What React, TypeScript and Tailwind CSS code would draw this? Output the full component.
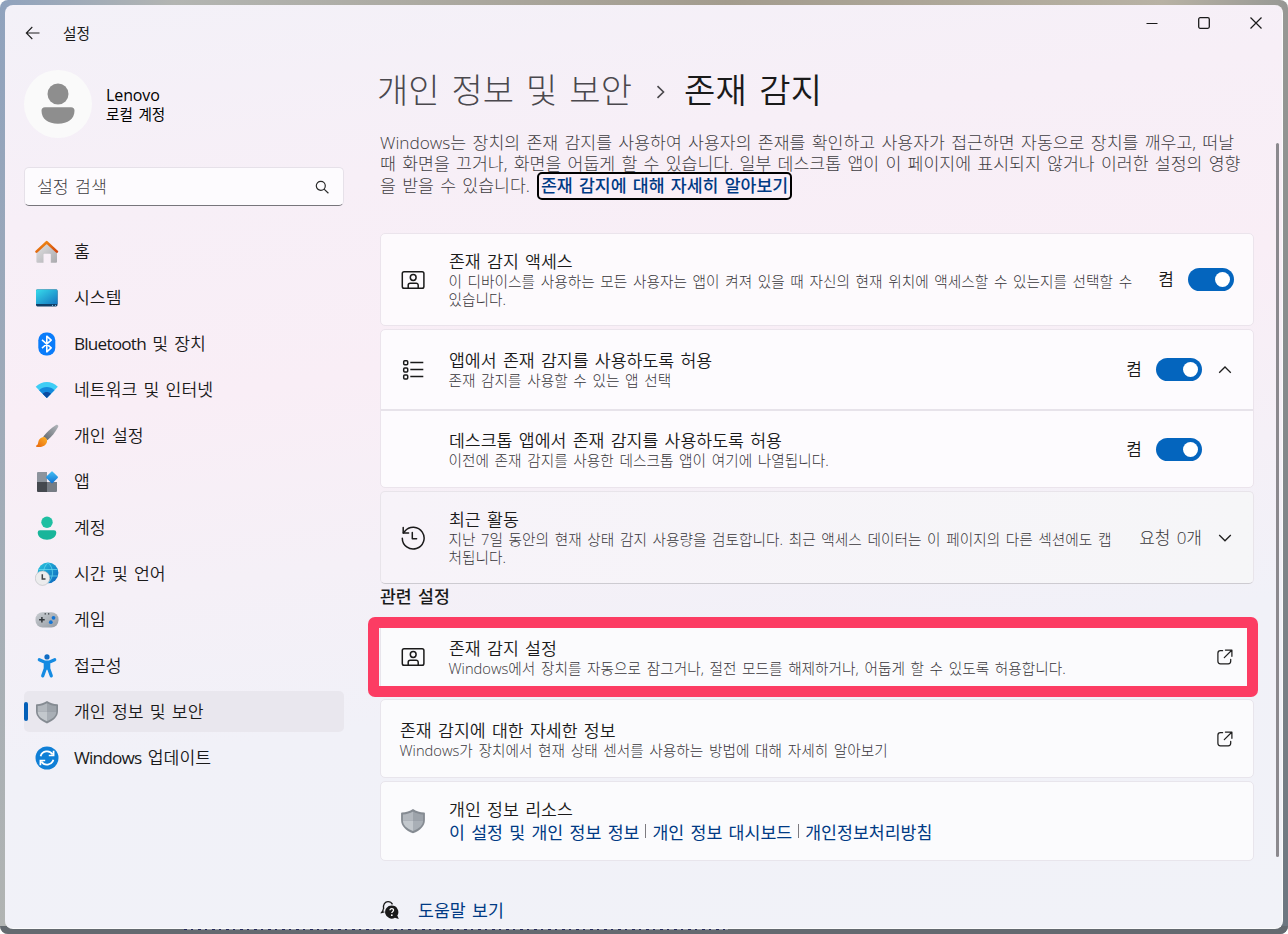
import type { ReactNode } from 'react';

type IconProps = { className?: string };

function HomeIcon() {
  return (
    <svg viewBox="0 0 24 24" className="size-6">
      <defs>
        <linearGradient id="homeBody" x1="0" y1="0" x2="1" y2="1">
          <stop offset="0" stopColor="#e4e4e6" />
          <stop offset="1" stopColor="#a9a9ad" />
        </linearGradient>
        <linearGradient id="homeRoof" x1="0" y1="0" x2="1" y2="1">
          <stop offset="0" stopColor="#f59313" />
          <stop offset="1" stopColor="#d2460f" />
        </linearGradient>
      </defs>
      <path d="M1.400 11.500 11.700 2.600 22 11.500v10.300a1 1 0 0 1-1 1h-5.200V14.500a.8.8 0 0 0-.8-.8H9.300a.8.8 0 0 0-.8.8v8.300H2.400a1 1 0 0 1-1-1Z" fill="url(#homeBody)" />
      <path d="M1.500 11.600 11.700 2.200l10.200 9.400" fill="none" stroke="url(#homeRoof)" strokeWidth="2.600" strokeLinecap="round" strokeLinejoin="round" />
    </svg>
  );
}

function SystemIcon() {
  return (
    <svg viewBox="0 0 24 24" className="size-6">
      <defs>
        <linearGradient id="sysScreen" x1="0" y1="0" x2="1" y2="1">
          <stop offset="0" stopColor="#37dcec" />
          <stop offset="1" stopColor="#1474bf" />
        </linearGradient>
      </defs>
      <rect x="1" y="3.500" width="21.500" height="17" rx="1.400" fill="#103e66" />
      <path d="M2.400 3.500h18.700a1.400 1.400 0 0 1 1.400 1.400v13H1v-13a1.400 1.400 0 0 1 1.400-1.400Z" fill="url(#sysScreen)" />
      <path d="M17 19.400h1M20 19.400h1" stroke="#7fc9ee" strokeWidth="1" />
    </svg>
  );
}

function BluetoothIcon() {
  return (
    <svg viewBox="0 0 24 24" className="size-6">
      <rect x="3.300" y="0.500" width="17" height="23" rx="7.800" fill="#0a7cfa" />
      <path d="m7 7.800 9.200 8-4.400 4V4.200l4.400 4L7 16.200" fill="none" stroke="#fff" strokeWidth="1.600" strokeLinejoin="round" />
    </svg>
  );
}

function NetworkIcon() {
  return (
    <svg viewBox="0 0 24 24" className="size-6">
      <path d="M.7 8.700C6.700 2.400 17 2.400 22.800 8.700L11.800 20Z" fill="#3fcdf5" />
      <path d="M4.100 12.200c4.300-4.400 11.100-4.400 15.400 0L11.800 20Z" fill="#1489dc" />
      <path d="M7.600 15.700c2.400-2.300 6-2.300 8.400 0L11.800 20Z" fill="#0a4aa0" />
    </svg>
  );
}

function BrushIcon() {
  return (
    <svg viewBox="0 0 24 24" className="size-6">
      <defs>
        <linearGradient id="brushHandle" x1="1" y1="0" x2="0" y2="1">
          <stop offset="0" stopColor="#b4b8bd" />
          <stop offset="1" stopColor="#5f666d" />
        </linearGradient>
        <linearGradient id="brushTip" x1="1" y1="0" x2="0" y2="1">
          <stop offset="0" stopColor="#fcb32a" />
          <stop offset="1" stopColor="#e8650b" />
        </linearGradient>
      </defs>
      <path d="M21 .9c1.500-.8 2.900.5 2.100 2.100-2.900 5.200-6.100 9.500-10.700 13.300L8.300 12.500C12 7.900 16 4 21 .9Z" fill="url(#brushHandle)" />
      <path d="M7.600 13.200c2.500-.6 5 1.700 4.400 4.500-.9 4.400-5.900 5.900-10.600 5-.6-.1-.6-.8 0-1.100 2-.9 1.500-2.800 2.300-5 .6-1.800 2.100-3 3.900-3.400Z" fill="url(#brushTip)" />
    </svg>
  );
}

function AppsIcon() {
  return (
    <svg viewBox="0 0 24 24" className="size-6">
      <defs>
        <linearGradient id="appTile" x1="0" y1="0" x2="1" y2="1">
          <stop offset="0" stopColor="#45c1f5" />
          <stop offset="1" stopColor="#0f6fd0" />
        </linearGradient>
      </defs>
      <path d="M3 2h9v10H2V3a1 1 0 0 1 1-1Z" fill="#8d949d" />
      <path d="M2 12h10v10H3a1 1 0 0 1-1-1Z" fill="#45494f" />
      <path d="M12 12h10v9a1 1 0 0 1-1 1h-9Z" fill="#767c84" />
      <rect x="12.500" y="2.800" width="9" height="9" rx="1" fill="url(#appTile)" transform="rotate(45 17 7.300)" />
    </svg>
  );
}

function AccountIcon() {
  return (
    <svg viewBox="0 0 24 24" className="size-6">
      <circle cx="12" cy="6.200" r="5.700" fill="#1fbfa2" />
      <path d="M5 14.200h14a2.300 2.300 0 0 1 2.300 2.300c0 4.400-4.200 7.200-9.300 7.200s-9.300-2.800-9.300-7.200A2.300 2.300 0 0 1 5 14.200Z" fill="#18b59a" />
    </svg>
  );
}

function TimeIcon() {
  return (
    <svg viewBox="0 0 24 24" className="size-6">
      <defs>
        <linearGradient id="globe" x1="0" y1="0" x2="1" y2="1">
          <stop offset="0" stopColor="#2bc8de" />
          <stop offset="1" stopColor="#0b62bd" />
        </linearGradient>
      </defs>
      <circle cx="13" cy="10.800" r="10.400" fill="url(#globe)" />
      <path d="M3.500 7.500h19M3.500 14h19M13 .6c-6 5.500-6 15 0 20.400M13 .6c6 5.500 6 15 0 20.400" fill="none" stroke="#6fe0f2" strokeWidth=".9" opacity=".75" />
      <circle cx="7.500" cy="16.200" r="7.200" fill="#ececed" stroke="#b9bcc0" strokeWidth=".6" />
      <path d="M7.300 12.200v4.900h3.200" fill="none" stroke="#3f4246" strokeWidth="1.500" />
    </svg>
  );
}

function GamingIcon() {
  return (
    <svg viewBox="0 0 24 24" className="size-6">
      <defs>
        <linearGradient id="pad" x1="0" y1="0" x2="1" y2="1">
          <stop offset="0" stopColor="#c9cdd2" />
          <stop offset="1" stopColor="#949aa2" />
        </linearGradient>
      </defs>
      <rect x=".5" y="4.300" width="23" height="15.300" rx="7" fill="url(#pad)" />
      <path d="M6.900 9v5.600M4.100 11.800h5.600" stroke="#33373c" strokeWidth="1.500" />
      <circle cx="18.500" cy="9.800" r="1.900" fill="#1474d4" />
      <circle cx="15.800" cy="14.200" r="1.900" fill="#1474d4" />
      <path d="M9.600 5.900h1.300M13 5.900h1.300" stroke="#33373c" strokeWidth="1.100" />
    </svg>
  );
}

function AccessibilityIcon() {
  return (
    <svg viewBox="0 0 24 24" className="size-6">
      <circle cx="12" cy="2.900" r="2.600" fill="#0f6cc4" />
      <path d="M4.300 5.700 10 8.200h4l5.700-2.500M10.300 8.600v6l-2.600 7.300M13.700 8.600v6l2.600 7.300" fill="none" stroke="#158be2" strokeWidth="3.200" strokeLinecap="round" strokeLinejoin="round" />
      <path d="M9.500 8.400h5v7.200h-5z" fill="#158be2" />
    </svg>
  );
}

function ShieldIcon({ className = 'size-6' }: IconProps) {
  return (
    <svg viewBox="0 0 24 24" className={className}>
      <path d="M12 1c3 2.100 6.300 3 10.300 3.200.4 0 .7.300.7.700v6.200c0 5.500-4.200 9.700-11 12.300C5.200 20.800 1 16.600 1 11.100V4.900c0-.4.3-.7.7-.7C5.700 4 9 3.100 12 1Z" fill="#858b92" />
      <path d="M12 3.300v8.500H2.700V6.100C6.200 5.800 9.200 5 12 3.300Z" fill="#b3b8be" />
      <path d="M12 3.300v8.500h9.300V6.100C17.800 5.800 14.800 5 12 3.300Z" fill="#9da3aa" />
      <path d="M2.700 11.800H12v9.500c-5.800-2.300-9.200-5.400-9.300-9.500Z" fill="#c3c8cd" />
      <path d="M21.300 11.800H12v9.500c5.800-2.300 9.200-5.400 9.300-9.500Z" fill="#a9afb6" />
    </svg>
  );
}

function UpdateIcon() {
  return (
    <svg viewBox="0 0 24 24" className="size-6">
      <circle cx="12" cy="12" r="11.500" fill="#0f7fd6" />
      <path d="M5.600 10.300A6.700 6.700 0 0 1 17.700 8.500M18.400 13.700A6.700 6.700 0 0 1 6.300 15.500" fill="none" stroke="#fff" strokeWidth="1.800" />
      <path d="M18.600 4.800v4.700h-4.800M5.400 19.200v-4.700h4.800" fill="none" stroke="#fff" strokeWidth="1.700" />
    </svg>
  );
}

function PresenceIcon() {
  return (
    <svg viewBox="0 0 24 24" className="size-6" fill="none" stroke="#1a1a1a" strokeWidth="1.500">
      <rect x="1.300" y="3.700" width="21.600" height="16.600" rx="1.800" />
      <circle cx="12.200" cy="9.500" r="2.900" />
      <path d="M7.200 20v-2.700a2 2 0 0 1 2-2h6a2 2 0 0 1 2 2V20" />
    </svg>
  );
}

function ListIcon() {
  return (
    <svg viewBox="0 0 24 24" className="size-6" fill="none" stroke="#1a1a1a" strokeWidth="1.500">
      <rect x="2.700" y="2.700" width="4" height="4" rx="1" />
      <rect x="2.700" y="9.900" width="4" height="4" rx="1" />
      <rect x="2.700" y="17.100" width="4" height="4" rx="1" />
      <path d="M9.300 4.500h13M9.300 11.500h13M9.300 18.500h13" />
    </svg>
  );
}

function HistoryIcon() {
  return (
    <svg viewBox="0 0 24 24" className="size-6" fill="none" stroke="#1a1a1a" strokeWidth="1.500" strokeLinecap="round" strokeLinejoin="round">
      <path d="M1.300 12.200a10.900 10.900 0 1 0 2.500-7L2.300 7" />
      <path d="M2.200 1.500v5.500h5.400M11.300 6.600v6.200h4.300" />
    </svg>
  );
}

function OpenIcon() {
  return (
    <svg viewBox="0 0 16 16" className="size-4 shrink-0" fill="none" stroke="#1f1f1f" strokeWidth="1.250" strokeLinecap="round" strokeLinejoin="round">
      <path d="M5.600 1.700H3.400A2.500 2.500 0 0 0 .9 4.200v8.100a2.500 2.500 0 0 0 2.500 2.500h7.800a2.500 2.500 0 0 0 2.500-2.500v-2" />
      <path d="M8.400 1h6.500v6.300M14.700 1.200 7.300 8.600" />
    </svg>
  );
}

function Chevron({ up }: { up?: boolean }) {
  return (
    <svg viewBox="0 0 14 14" className="size-3.5 shrink-0" fill="none" stroke="#1f1f1f" strokeWidth="1.300">
      <path d={up ? 'M1.200 9.800 7 4l5.800 5.800' : 'M1.200 4 7 9.800 12.800 4'} />
    </svg>
  );
}

function HelpIcon() {
  return (
    <svg viewBox="0 0 20 20" className="size-5">
      <path d="M3.600 9.200C2.600 4.500 5.200 1.700 8 1.700c2.100 0 3.600 1 4.500 2.700M3.400 8.800c-.2 1.500-.8 2.700-1.700 3.700 1 0 1.900-.2 2.700-.7" fill="none" stroke="#1a1a1a" strokeWidth="1.300" />
      <path d="M11.700 5.600a6.500 6.500 0 1 0 3.200 12.100l3.900 1.200-1.500-3.300a6.500 6.500 0 0 0-5.600-10Z" fill="#1a1a1a" />
      <path d="M10 10.300c0-2.400 3.700-2.200 3.500 0-.1 1.300-1.700 1.400-1.700 2.800" fill="none" stroke="#fff" strokeWidth="1.300" />
      <circle cx="11.800" cy="15.200" r=".9" fill="#fff" />
    </svg>
  );
}

const navItems: { latin?: string; label: string; icon: ReactNode; active?: boolean }[] = [
  { label: '홈', icon: <HomeIcon /> },
  { label: '시스템', icon: <SystemIcon /> },
  { latin: 'Bluetooth', label: ' 및 장치', icon: <BluetoothIcon /> },
  { label: '네트워크 및 인터넷', icon: <NetworkIcon /> },
  { label: '개인 설정', icon: <BrushIcon /> },
  { label: '앱', icon: <AppsIcon /> },
  { label: '계정', icon: <AccountIcon /> },
  { label: '시간 및 언어', icon: <TimeIcon /> },
  { label: '게임', icon: <GamingIcon /> },
  { label: '접근성', icon: <AccessibilityIcon /> },
  { label: '개인 정보 및 보안', icon: <ShieldIcon />, active: true },
  { latin: 'Windows', label: ' 업데이트', icon: <UpdateIcon /> },
];

function TitleBar() {
  return (
    <header className="flex h-14 shrink-0 justify-between">
      <div className="flex items-center pl-5">
        <svg viewBox="0 0 16 16" className="size-4" fill="none" stroke="#1f1f1f" strokeWidth="1.100">
          <path d="M14.500 8H1.300M7.300 2 1.300 8l6 6" />
        </svg>
        <span className="ml-[22px] text-[14.700px]">설정</span>
      </div>
      <div className="flex h-[35px] items-center gap-10 pr-5">
        <svg viewBox="0 0 12 12" className="size-3" stroke="#1a1a1a" strokeWidth="1.200">
          <path d="M.5 6.500h11" />
        </svg>
        <svg viewBox="0 0 12 12" className="size-3" fill="none" stroke="#1a1a1a" strokeWidth="1.300">
          <rect x=".7" y=".7" width="10.600" height="10.600" rx="1.500" />
        </svg>
        <svg viewBox="0 0 12 12" className="size-3" stroke="#1a1a1a" strokeWidth="1.200">
          <path d="m.5.5 11 11M11.500.5l-11 11" />
        </svg>
      </div>
    </header>
  );
}

function Sidebar() {
  return (
    <aside className="w-[339px] shrink-0 pt-[9px] pl-[19px]">
      <div className="flex items-center">
        <div className="flex size-[68px] items-center justify-center rounded-full bg-[#fafafa]">
          <svg viewBox="0 0 34 42" className="h-[42px] w-[34px]" fill="#8e8e8e">
            <circle cx="17" cy="11" r="10.500" />
            <path d="M4 24.300h26a3.500 3.500 0 0 1 3.500 3.500c0 8-6.500 13-16.500 13s-16.500-5-16.500-13A3.500 3.500 0 0 1 4 24.300Z" />
          </svg>
        </div>
        <div className="ml-[14px] flex flex-col text-black">
          <span className="text-base leading-5 font-medium tracking-[-0.1px]">Lenovo</span>
          <span className="text-[14.600px] leading-[18px] [word-spacing:1.800px]">로컬 계정</span>
        </div>
      </div>

      <div className="mt-[29px] flex h-[39px] items-center justify-between rounded-[5px] border border-[#e6e1e9] border-b-[#77757b] bg-[#fdfbfe] pr-3.5 pl-3">
        <span className="text-[17.250px] font-light text-[#3f3d42] [word-spacing:1.800px]">설정 검색</span>
        <svg viewBox="0 0 14 14" className="size-3.5" fill="none" stroke="#2a2a2a" strokeWidth="1.200">
          <circle cx="5.800" cy="5.800" r="4.500" />
          <path d="m9.100 9.100 4.300 4.100" />
        </svg>
      </div>

      <nav className="mt-[25px] flex flex-col gap-[5px]">
        {navItems.map((item) => (
          <a
            key={item.label}
            href="#"
            className={`relative flex h-[41px] items-center rounded-[5px] pl-[11px] ${item.active ? 'bg-[#e9e7ee]' : ''}`}
          >
            {item.active && <span className="absolute top-[11px] left-0 h-[19px] w-1 rounded-full bg-[#0460b8]" />}
            {item.icon}
            <span className="ml-[15px] text-[17.200px] font-[350] whitespace-pre [word-spacing:1.800px]">
              {item.latin && <span className="font-normal tracking-[-0.800px]">{item.latin}</span>}
              {item.label}
            </span>
          </a>
        ))}
      </nav>
    </aside>
  );
}

function Toggle() {
  return (
    <div className="flex shrink-0 items-center gap-[13px]">
      <span className="pt-px pr-px text-[17px] font-[350]">켬</span>
      <button type="button" className="flex h-[23px] w-[46px] items-center justify-end rounded-full bg-[#0465be] pr-1">
        <span className="size-[15px] rounded-full bg-white" />
      </button>
    </div>
  );
}

function RowText({ title, lines }: { title: string; lines: string[] }) {
  return (
    <div className="flex flex-col whitespace-nowrap">
      <span className="pl-px text-[17.250px] leading-[21px] font-[350] [word-spacing:1.800px]">{title}</span>
      {lines.map((line) => (
        <span key={line} className="pl-[0.500px] text-[14.680px] leading-[18px] font-light text-[#38363a] [word-spacing:1.800px]">
          {line}
        </span>
      ))}
    </div>
  );
}

function Row({
  icon,
  title,
  lines,
  children,
  className = '',
}: {
  icon?: ReactNode;
  title: string;
  lines: string[];
  children?: ReactNode;
  className?: string;
}) {
  return (
    <div className={`flex items-center ${className}`}>
      <div className="flex w-[67px] shrink-0 pl-5">{icon}</div>
      <RowText title={title} lines={lines} />
      <div className="ml-auto flex items-center">{children}</div>
    </div>
  );
}

function Main() {
  return (
    <main className="min-w-0 flex-1 pl-9">
      <h1 className="flex h-[58px] items-center text-[34px] whitespace-nowrap [word-spacing:3px]">
        <span className="-ml-[3px] font-light tracking-[0.050px] text-[#4a484d]">개인 정보 및 보안</span>
        <svg viewBox="0 0 10 14" className="mt-1 mr-[18px] ml-6 h-3.5 w-2.5" fill="none" stroke="#4a484c" strokeWidth="1.600">
          <path d="m1.500 1.200 6 5.800-6 5.800" />
        </svg>
        <span className="font-[350] tracking-[0.3px]">존재 감지</span>
      </h1>

      <div className="mt-[13px] flex flex-col text-[17.250px] font-light whitespace-nowrap text-[#3f3d42] [word-spacing:1.800px]">
        <p className="h-[21px] leading-[21px]">
          Windows는 장치의 존재 감지를 사용하여 사용자의 존재를 확인하고 사용자가 접근하면 자동으로 장치를 깨우고, 떠날
        </p>
        <p className="h-[21px] leading-[21px]">
          때 화면을 끄거나, 화면을 어둡게 할 수 있습니다. 일부 데스크톱 앱이 이 페이지에 표시되지 않거나 이러한 설정의 영향
        </p>
        <p className="flex h-[23px] items-center">
          <span>을 받을 수 있습니다.</span>
          <a
            href="#"
            className="ml-[7px] flex h-7 w-[255px] shrink-0 items-center rounded-[5px] border-2 border-black bg-[#faeff7] pl-0.5 font-medium text-[#003a84]"
          >
            존재 감지에 대해 자세히 알아보기
          </a>
        </p>
      </div>

      <div className="mt-9 flex w-[874px] flex-col">
        <section className="h-[93px] rounded-[5px] border border-[#ebe4ec] bg-[#fdfafd]">
          <Row
            className="h-full pr-[19px]"
            icon={<PresenceIcon />}
            title="존재 감지 액세스"
            lines={['이 디바이스를 사용하는 모든 사용자는 앱이 켜져 있을 때 자신의 현재 위치에 액세스할 수 있는지를 선택할 수', '있습니다.']}
          >
            <Toggle />
          </Row>
        </section>

        <section className="mt-[3px] h-[159px] rounded-[5px] border border-[#ebe4ec] bg-[#fdfbfe]">
          <Row
            className="h-[79px] pr-[21px]"
            icon={<ListIcon />}
            title="앱에서 존재 감지를 사용하도록 허용"
            lines={['존재 감지를 사용할 수 있는 앱 선택']}
          >
            <Toggle />
            <span className="ml-4">
              <Chevron up />
            </span>
          </Row>
          <Row
            className="h-[78px] border-t-2 border-[#e7e3ea] pr-[51px]"
            title="데스크톱 앱에서 존재 감지를 사용하도록 허용"
            lines={['이전에 존재 감지를 사용한 데스크톱 앱이 여기에 나열됩니다.']}
          >
            <Toggle />
          </Row>
        </section>

        <section className="mt-[3px] h-[93px] rounded-[5px] border border-[#e8e4ea] border-b-[#cdcbd1] bg-linear-to-r from-[#f7f3f9] to-[#f6f6f8]">
          <Row
            className="h-full pr-[21px]"
            icon={<HistoryIcon />}
            title="최근 활동"
            lines={['지난 7일 동안의 현재 상태 감지 사용량을 검토합니다. 최근 액세스 데이터는 이 페이지의 다른 섹션에도 캡', '처됩니다.']}
          >
            <span className="mr-4 text-[17px] font-light whitespace-nowrap text-[#38363a] [word-spacing:1.800px]">요청 0개</span>
            <Chevron />
          </Row>
        </section>

        <h2 className="h-[34px] text-[17.250px] leading-[25px] font-medium [word-spacing:1.800px]">관련 설정</h2>

        <section className="relative h-[78px] rounded-[5px] border border-[#e8e5ec] bg-[#fbfbfd]">
          <Row
            className="h-full pr-5"
            icon={<PresenceIcon />}
            title="존재 감지 설정"
            lines={['Windows에서 장치를 자동으로 잠그거나, 절전 모드를 해제하거나, 어둡게 할 수 있도록 허용합니다.']}
          >
            <OpenIcon />
          </Row>
          {/* highlight frame around the presence settings card */}
          <div className="pointer-events-none absolute -top-0.5 -left-[13px] h-20 w-[890px] rounded-[7px] bg-[#fc3c63] [clip-path:polygon(evenodd,0_0,100%_0,100%_100%,0_100%,0_0,11px_11px,879px_11px,879px_69px,11px_69px,11px_11px)]" />
        </section>

        <section className="mt-[3px] h-[79px] rounded-[5px] border border-[#e8e5ec] bg-[#fbfbfd]">
          <div className="flex h-full items-center justify-between pt-px pr-5 pl-[18px]">
            <RowText title="존재 감지에 대한 자세한 정보" lines={['Windows가 장치에서 현재 상태 센서를 사용하는 방법에 대해 자세히 알아보기']} />
            <OpenIcon />
          </div>
        </section>

        <section className="mt-[3px] flex h-20 items-center rounded-[5px] border border-[#e8e5ec] bg-[#fbfbfd]">
          <div className="w-[67px] shrink-0 pl-[19px]">
            <ShieldIcon className="size-[26px]" />
          </div>
          <div className="flex flex-col pt-0.5 pl-px text-[17.300px] whitespace-nowrap [word-spacing:1.800px]">
            <span className="leading-[22px] font-[350]">개인 정보 리소스</span>
            <div className="flex items-center leading-6 text-[#003a84]">
              <a href="#">이 설정 및 개인 정보 정보</a>
              <span className="mx-1.5 mb-1 h-3.5 w-px bg-[#7d7b80]" />
              <a href="#">개인 정보 대시보드</a>
              <span className="mx-1.5 mb-1 h-3.5 w-px bg-[#7d7b80]" />
              <a href="#">개인정보처리방침</a>
            </div>
          </div>
        </section>

        <a href="#" className="mt-[37px] flex h-6 items-center text-[17.300px] text-[#003a84] [word-spacing:1.800px]">
          <HelpIcon />
          <span className="ml-[18px] pt-px">도움말 보기</span>
        </a>
      </div>
    </main>
  );
}

export default function App() {
  return (
    <div className="h-[934px] w-[1288px] overflow-hidden bg-white font-['Open_Sans','Noto_Sans_CJK_KR',sans-serif] text-[#1a1a1a]">
      <div className="relative h-full rounded-lg bg-[linear-gradient(100deg,#8fa2bd_0%,#b3b5b2_12%,#a39c8e_50%,#b8b2a4_80%,#6c7680_100%)] p-[5px]">
        {/* desktop showing below the window */}
        <div className="absolute inset-x-0 bottom-0 h-2 rounded-b-lg bg-[#646a70]" />
        <div className="absolute bottom-1 left-[184px] h-px w-[544px] bg-[repeating-linear-gradient(90deg,#23285a_0_3px,#9a9ea5_3px_7px,#23285a_7px_9px,#9a9ea5_9px_14px)]" />
        <div className="relative flex h-[924px] w-[1278px] flex-col overflow-hidden rounded-lg border-r border-b border-[#fbfbfc] bg-[linear-gradient(172deg,#f3f1f8_0%,#f7eff7_20%,#f9eef6_38%,#f5f0f7_55%,#f1f1f8_70%,#f1f2f8_100%)]">
          <TitleBar />
          <div className="flex min-h-0 flex-1">
            <Sidebar />
            <Main />
          </div>
          {/* scrollbar thumb */}
          <div className="absolute top-[138px] right-[3px] h-[714px] w-[3px] rounded-full bg-[#8b898e]" />
        </div>
      </div>
    </div>
  );
}
